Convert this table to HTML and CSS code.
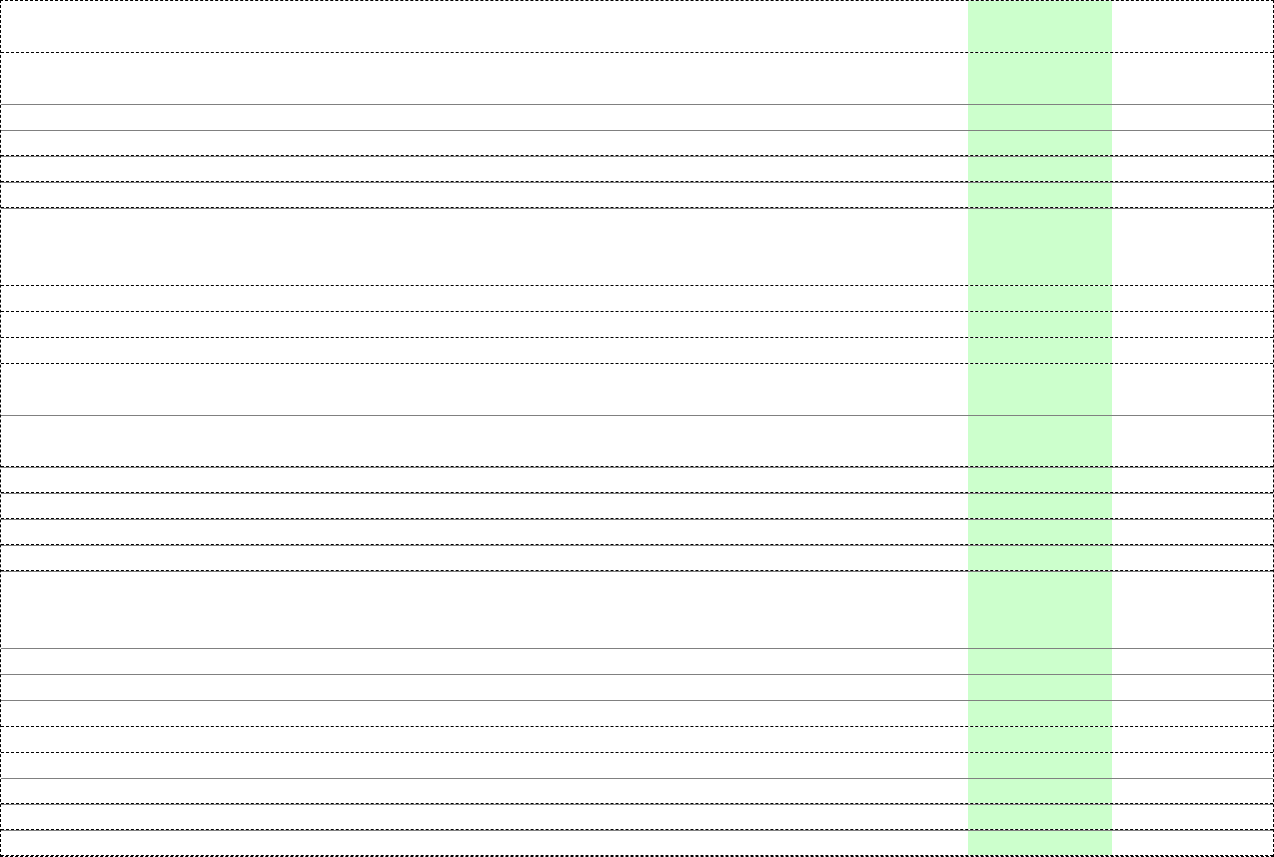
FILE: index.html
```html
<!DOCTYPE html>
<html lang="en">
<head>
<meta charset="utf-8">
<title>Table</title>
<link rel="stylesheet" href="styles.css">
</head>
<body>
<div class="sheet">
  <div class="row h52 b-dash"><div class="c"></div><div class="c g"></div><div class="c"></div></div>
  <div class="row h52 b-solid"><div class="c"></div><div class="c g"></div><div class="c"></div></div>
  <div class="row h26 b-solid"><div class="c"></div><div class="c g"></div><div class="c"></div></div>
  <div class="row h25 b-dash"><div class="c"></div><div class="c g"></div><div class="c"></div></div>
  <div class="row h26 t-solid b-dash"><div class="c"></div><div class="c g"></div><div class="c"></div></div>
  <div class="row h26 t-solid b-dash"><div class="c"></div><div class="c g"></div><div class="c"></div></div>
  <div class="row h78 t-solid b-dash"><div class="c"></div><div class="c g"></div><div class="c"></div></div>
  <div class="row h26 b-dash"><div class="c"></div><div class="c g"></div><div class="c"></div></div>
  <div class="row h26 b-dash"><div class="c"></div><div class="c g"></div><div class="c"></div></div>
  <div class="row h26 b-dash"><div class="c"></div><div class="c g"></div><div class="c"></div></div>
  <div class="row h52 b-solid"><div class="c"></div><div class="c g"></div><div class="c"></div></div>
  <div class="row h51 b-dash"><div class="c"></div><div class="c g"></div><div class="c"></div></div>
  <div class="row h26 t-solid b-dash"><div class="c"></div><div class="c g"></div><div class="c"></div></div>
  <div class="row h26 t-solid b-dash"><div class="c"></div><div class="c g"></div><div class="c"></div></div>
  <div class="row h26 t-solid b-dash"><div class="c"></div><div class="c g"></div><div class="c"></div></div>
  <div class="row h26 t-solid b-dash"><div class="c"></div><div class="c g"></div><div class="c"></div></div>
  <div class="row h78 t-solid b-solid"><div class="c"></div><div class="c g"></div><div class="c"></div></div>
  <div class="row h26 b-solid"><div class="c"></div><div class="c g"></div><div class="c"></div></div>
  <div class="row h26 b-solid"><div class="c"></div><div class="c g"></div><div class="c"></div></div>
  <div class="row h26 b-dash"><div class="c"></div><div class="c g"></div><div class="c"></div></div>
  <div class="row h26 b-dash"><div class="c"></div><div class="c g"></div><div class="c"></div></div>
  <div class="row h26 b-solid"><div class="c"></div><div class="c g"></div><div class="c"></div></div>
  <div class="row h25 b-dash"><div class="c"></div><div class="c g"></div><div class="c"></div></div>
  <div class="row h26 t-solid b-dash"><div class="c"></div><div class="c g"></div><div class="c"></div></div>
  <div class="row h26 t-solid b-dash"><div class="c"></div><div class="c g"></div><div class="c"></div></div>
</div>
</body>
</html>
```

FILE: styles.css
```css
html, body {
  margin: 0;
  padding: 0;
  background: #ffffff;
  font-family: "Liberation Sans", Arial, sans-serif;
}

.sheet {
  box-sizing: border-box;
  width: 1274px;
  height: 857px;
  border: 1px dashed #000000;
  display: flex;
  flex-direction: column;
  overflow: hidden;
}

.row {
  box-sizing: border-box;
  display: grid;
  grid-template-columns: 967px 144px 1fr;
  flex: none;
}

.c {
  min-width: 0;
}

.g {
  background: #ccffcc;
}

.h25 { height: 25px; }
.h26 { height: 26px; }
.h51 { height: 51px; }
.h52 { height: 52px; }
.h78 { height: 78px; }

.b-dash { border-bottom: 1px dashed #000000; }
.b-solid { border-bottom: 1px solid #808080; }
.t-solid { border-top: 1px solid #808080; }
```
